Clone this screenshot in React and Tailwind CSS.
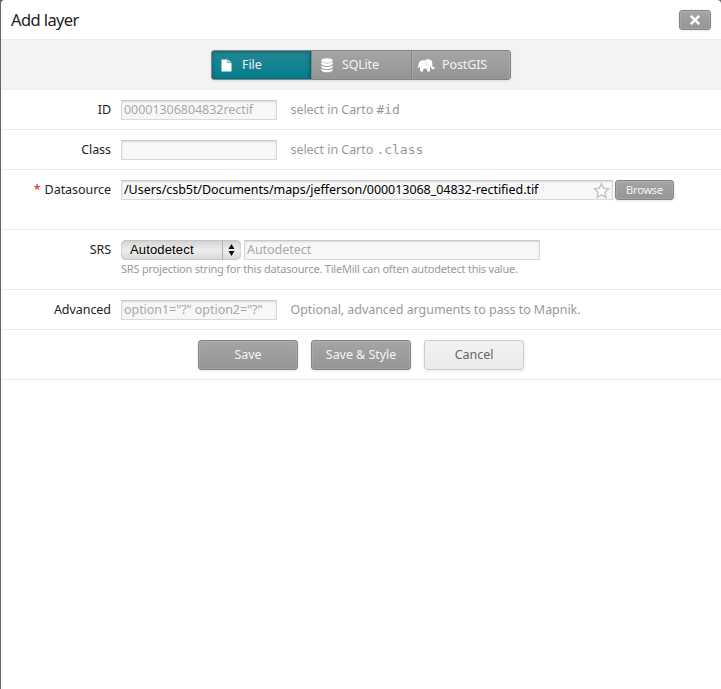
import React from 'react';

const darkButton =
  'box-border flex items-center justify-center rounded-[3px] border border-[#858585] bg-gradient-to-b from-[#a5a5a5] to-[#959595] text-[#f4f4f4] shadow-[inset_0_0_1px_1px_rgba(255,255,255,0.13),0_1px_3px_rgba(0,0,0,0.1)]';

const fieldBox =
  'box-border flex h-5 shrink-0 items-center border border-[#d9d9d9] border-t-[#c8c8c8] bg-[#f7f7f7] pl-0.5 leading-[18px] whitespace-nowrap shadow-[inset_0_1px_2px_rgba(0,0,0,0.12)]';

function FileIcon() {
  return (
    <svg className="h-[13px] w-[11px] shrink-0" viewBox="0 0 11 13" fill="#fff">
      <path d="M.5 0.500H6.500v3.500h4v8.500H.5z" />
      <path d="M7.300 .5l3.200 3H7.300z" opacity=".9" />
    </svg>
  );
}

function DatabaseIcon() {
  return (
    <svg className="h-[15px] w-[12px] shrink-0" viewBox="0 0 12 15" fill="#fff">
      <ellipse cx="6" cy="2.500" rx="5.700" ry="2.300" />
      <path d="M.3 3.800C2 6 10 6 11.700 3.800V6C10 8.500 2 8.500.3 6z" />
      <path d="M.3 7.300C2 9.500 10 9.500 11.700 7.300v2C10 11.800 2 11.800.3 9.300z" />
      <path d="M.3 10.600C2 12.800 10 12.800 11.700 10.600v1.600C10 15 2 15 .3 12.200z" />
    </svg>
  );
}

function ElephantIcon() {
  return (
    <svg className="h-[13px] w-[18px] shrink-0" viewBox="0 0 18 13" fill="#fff">
      <path d="M.3 9.200C1.300 8.400 1.300 6 1.700 4.400 2.300 2.300 3.900 1.200 6 1.200c.8 0 1.500 0 2.100.2C9 .3 10.300 0 11.800.3c2.300.2 3.400 1.700 3.500 4 .1 2 .1 3.500.7 4 .4.300.8 0 .9-.6l.9.200c0 1.500-.8 2.400-1.900 2.300-1.400-.1-2-1.300-2.200-2.700h-.6l-.2 5h-2.700l-.2-2.800H6.300l-.2 2.800H3.200L2.900 8.600l-.8-1C1.900 8.600 1.300 9.700.3 9.200z" />
      <path d="M9 2.200c-.5 1.800-.3 3.800 1.300 4.300 1 .2 1.400-.5 1.500-1.200" fill="none" stroke="#b5b5b5" strokeWidth=".5" />
    </svg>
  );
}

function Row({ label, required, tall, children }) {
  return (
    <div className={`box-border flex border-b border-[#ebebeb] pt-[10px] ${tall ? 'h-[60px]' : 'h-10'}`}>
      <div className="mr-[10px] h-5 w-[110px] shrink-0 text-right leading-[19px] whitespace-nowrap">
        {required && <span className="mr-1 text-[#e02010]">*</span>}
        {label}
      </div>
      {children}
    </div>
  );
}

function SelectorHint({ children }) {
  return (
    <div className="ml-[13.5px] leading-[19px] text-[#999]">
      select in Carto{' '}
      <code className="font-['DejaVu_Sans_Mono',monospace] text-[13px] tracking-normal">{children}</code>
    </div>
  );
}

export default function App() {
  return (
    <div className="h-[689px] w-[721px] overflow-hidden bg-[#666]">
      <div className="ml-px h-[689px] w-[720px] rounded-t-[4px] bg-white font-['Noto_Sans','Open_Sans',sans-serif] text-[12.5px] tracking-[-0.05px] text-[#222]">
        <header className="box-border flex h-10 items-center justify-between border-b border-[#ebebeb] pr-[10px] pl-[10px]">
          <h1 className="text-[16.5px] leading-5 tracking-[-0.6px]">Add layer</h1>
          <button className={`${darkButton} h-5 w-8`}>
            <svg className="h-[10px] w-[10px]" viewBox="0 0 10 10">
              <path d="M.8.800l8.400 8.400M9.200.800L.8 9.200" stroke="#fff" strokeWidth="2.400" />
            </svg>
          </button>
        </header>

        <nav className="box-border flex h-[50px] justify-center border-b border-[#ebebeb] bg-[#f3f3f3] pt-[10px]">
          <div className="box-border flex h-[30px] w-[300px] overflow-hidden rounded-[3px] border border-[#858585] bg-gradient-to-b from-[#a5a5a5] to-[#959595] text-[#f4f4f4] shadow-[0_1px_3px_rgba(0,0,0,0.1)]">
            <div className="-mt-px -ml-px box-border flex h-[30px] w-[100px] shrink-0 items-center rounded-l-[3px] border border-[#006470] bg-gradient-to-b from-[#228995] to-[#007d8b] pl-[9px] shadow-[inset_0_1px_4px_rgba(0,60,70,0.5)]">
              <FileIcon />
              <span className="ml-[10px]">File</span>
            </div>
            <div className="-mt-px box-border flex h-[30px] w-[101px] shrink-0 items-center border-x border-[#858585] pl-[9px] shadow-[inset_1px_2px_0_-1px_rgba(255,255,255,0.18)]">
              <DatabaseIcon />
              <span className="ml-[9px] tracking-[-0.2px]">SQLite</span>
            </div>
            <div className="-mt-px box-border flex h-[30px] flex-1 items-center pl-[5px] shadow-[inset_0_0_1px_1px_rgba(255,255,255,0.13)]">
              <ElephantIcon />
              <span className="ml-[7px] tracking-[-0.1px]">PostGIS</span>
            </div>
          </div>
        </nav>

        <Row label="ID">
          <div className={`${fieldBox} w-[156px] text-[#a9a9a9]`}>00001306804832rectif</div>
          <SelectorHint>#id</SelectorHint>
        </Row>
        <Row label="Class">
          <div className={`${fieldBox} w-[156px]`} />
          <SelectorHint>.class</SelectorHint>
        </Row>
        <Row label="Datasource" required tall>
          <div className={`${fieldBox} w-[492px] justify-between pr-[2.5px] text-black`}>
            <span>/Users/csb5t/Documents/maps/jefferson/000013068_04832-rectified.tif</span>
            <svg className="h-[17px] w-[17px]" viewBox="0 0 17 17">
              <path d="M8.500 1.500l2.100 4.700 5.100.6-3.800 3.500 1 5-4.400-2.500-4.400 2.500 1-5L1.300 6.800l5.100-.6z" fill="#fff" stroke="#c4c4c4" strokeWidth="1.500" />
            </svg>
          </div>
          <button className={`${darkButton} ml-[2px] h-5 w-[59px] text-[11px] tracking-[-0.2px]`}>Browse</button>
        </Row>
        <Row label="SRS" tall>
          <div>
            <div className="flex">
              <div className="box-border flex h-5 w-[120px] items-center rounded-[5px] bg-gradient-to-b from-[#d2d2d2] via-[#ededed] to-[#d8d8d8] pl-[9px] font-['Liberation_Sans',Arial,sans-serif] text-[13px] tracking-[0.15px] text-black shadow-[inset_0_0_2px_rgba(0,0,0,0.25)]">
                <span className="w-[92px] leading-5">Autodetect</span>
                <span className="flex h-5 flex-1 items-center justify-center border-l border-[#b0b0b0] pr-[2px]">
                  <svg className="h-[12px] w-[7px]" viewBox="0 0 7 12">
                    <path d="M3.500 0l3 5H.5zM3.500 12l3-5H.5z" fill="#111" />
                  </svg>
                </span>
              </div>
              <div className={`${fieldBox} ml-[3px] w-[296px] text-[#a9a9a9]`}>Autodetect</div>
            </div>
            <p className="text-[11px] leading-[18px] tracking-[-0.215px] text-[#999]">
              SRS projection string for this datasource. TileMill can often autodetect this value.
            </p>
          </div>
        </Row>
        <Row label="Advanced">
          <div className={`${fieldBox} w-[156px] text-[#a9a9a9]`}>option1="?" option2="?"</div>
          <div className="ml-[13.5px] leading-[19px] text-[#999]">Optional, advanced arguments to pass to Mapnik.</div>
        </Row>

        <footer className="box-border flex h-[50px] justify-center gap-[13px] border-b border-[#ebebeb] pt-[10px]">
          <button className={`${darkButton} h-[30px] w-[100px]`}>Save</button>
          <button className={`${darkButton} h-[30px] w-[100px]`}>Save &amp; Style</button>
          <button className="box-border flex h-[30px] w-[100px] items-center justify-center rounded-[3px] border border-[#ccc] bg-gradient-to-b from-[#f2f2f2] to-[#ebebeb] text-[#666] shadow-[0_1px_3px_rgba(0,0,0,0.1)]">
            Cancel
          </button>
        </footer>
      </div>
    </div>
  );
}
